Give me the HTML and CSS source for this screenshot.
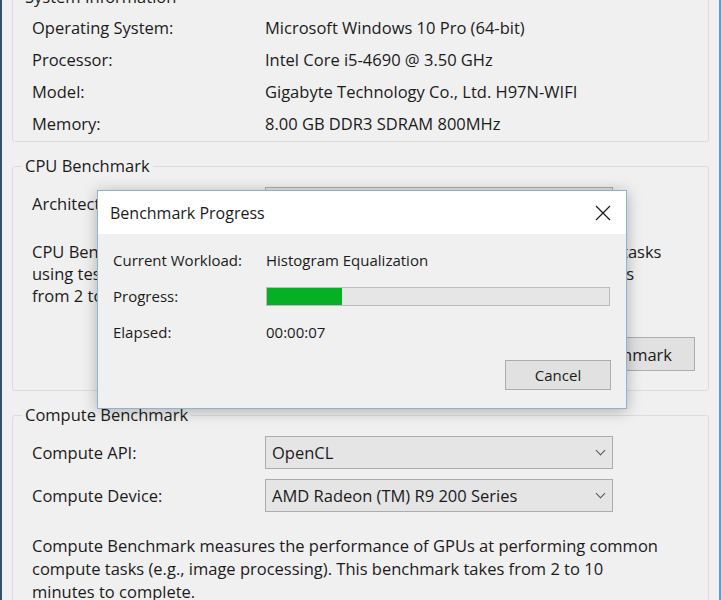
FILE: index.html
```html
<!DOCTYPE html>
<html lang="en">
<head>
    <meta charset="UTF-8">
    <meta name="viewport" content="width=device-width, initial-scale=1.0">
    <title>Geekbench</title>
    <link rel="stylesheet" href="styles.css">
</head>
<body>
    <div class="window">

        <fieldset class="group sysinfo">
            <legend>System Information</legend>
            <div class="group-body">
                <div class="info-row"><span class="label">Operating System:</span><span>Microsoft Windows 10 Pro (64-bit)</span></div>
                <div class="info-row"><span class="label">Processor:</span><span>Intel Core i5-4690 @ 3.50 GHz</span></div>
                <div class="info-row"><span class="label">Model:</span><span>Gigabyte Technology Co., Ltd. H97N-WIFI</span></div>
                <div class="info-row"><span class="label">Memory:</span><span>8.00 GB DDR3 SDRAM 800MHz</span></div>
            </div>
        </fieldset>

        <fieldset class="group">
            <legend>CPU Benchmark</legend>
            <div class="group-body">
                <div class="field">
                    <span class="label">Architecture:</span>
                    <div class="select">64-bit (x86_64)<span class="chevron"></span></div>
                </div>
                <p class="desc">CPU Benchmark measures the performance of CPUs at performing common tasks<br>
                    using tests that simulate real-world applications. This benchmark usually takes<br>
                    from 2 to 20 minutes to complete.</p>
                <div class="actions"><button class="btn">Run CPU Benchmark</button></div>
            </div>
        </fieldset>

        <fieldset class="group">
            <legend>Compute Benchmark</legend>
            <div class="group-body">
                <div class="field">
                    <span class="label">Compute API:</span>
                    <div class="select">OpenCL<span class="chevron"></span></div>
                </div>
                <div class="field">
                    <span class="label">Compute Device:</span>
                    <div class="select">AMD Radeon (TM) R9 200 Series<span class="chevron"></span></div>
                </div>
                <p class="desc compute-desc">Compute Benchmark measures the performance of GPUs at performing common<br>
                    compute tasks (e.g., image processing). This benchmark takes from 2 to 10<br>
                    minutes to complete.</p>
            </div>
        </fieldset>

        <!-- modal progress dialog -->
        <div class="dialog">
            <div class="dialog-title">
                <span>Benchmark Progress</span>
                <span class="close">
                    <svg width="16" height="16" viewBox="0 0 16 16">
                        <path d="M1 1 L15 15 M15 1 L1 15" stroke="#1a1a1a" stroke-width="1.2" fill="none"/>
                    </svg>
                </span>
            </div>
            <div class="dialog-body">
                <div class="dialog-row"><span class="dlabel">Current Workload:</span><span>Histogram Equalization</span></div>
                <div class="dialog-row">
                    <span class="dlabel">Progress:</span>
                    <div class="progress"><div class="progress-fill" style="width: 22%;"></div></div>
                </div>
                <div class="dialog-row"><span class="dlabel">Elapsed:</span><span>00:00:07</span></div>
                <div class="dialog-actions"><button class="btn cancel">Cancel</button></div>
            </div>
        </div>

    </div>
</body>
</html>
```

FILE: styles.css
```css
html, body {
    margin: 0;
    height: 100%;
    overflow: hidden;
}

body {
    background: #f0f0f0;
    font-family: "Open Sans", "Noto Sans", sans-serif;
    font-size: 16.5px;
    color: #1b1b1b;
}

.window {
    position: relative;
    display: flow-root;
    height: 600px;
    box-sizing: border-box;
    padding: 0 10px;
    border-left: 2px solid #34516e;
    border-right: 2px solid #5f9ccb;
}

.group {
    margin: 14px 0 0;
    padding: 0;
    min-width: 0;
    border: 1px solid #dcdcdc;
    border-radius: 3px;
}

.group legend {
    margin-left: 9px;
    padding: 0 3px;
    line-height: 20px;
}

.sysinfo {
    margin-top: -13px;
}

.group-body {
    padding: 11px 13px 19px 19px;
}

.sysinfo .group-body {
    padding-top: 4px;
    padding-bottom: 2px;
}

.info-row {
    display: flex;
    align-items: center;
    height: 32px;
}

.label {
    width: 233px;
    flex-shrink: 0;
}

.field {
    display: flex;
    align-items: center;
    margin-bottom: 10px;
}

.select {
    position: relative;
    width: 348px;
    height: 33px;
    box-sizing: border-box;
    display: flex;
    align-items: center;
    padding-left: 6px;
    background: #e5e5e5;
    border: 1px solid #acacac;
}

.chevron {
    position: absolute;
    right: 8px;
    top: 10px;
    width: 6px;
    height: 6px;
    border-right: 1.5px solid #555;
    border-bottom: 1.5px solid #555;
    transform: rotate(45deg);
}

.desc {
    margin: 21px 0 0;
    line-height: 22px;
    white-space: nowrap;
}

.compute-desc {
    margin-top: 22px;
    line-height: 23px;
}

.actions {
    display: flex;
    justify-content: flex-end;
    margin-top: 30px;
}

.btn {
    font-family: inherit;
    font-size: inherit;
    color: #1b1b1b;
    background: #e1e1e1;
    border: 1px solid #adadad;
    height: 34px;
    padding: 0 22px;
}

/* dialog */

.dialog {
    position: absolute;
    left: 95px;
    top: 190px;
    width: 530px;
    height: 219px;
    box-sizing: border-box;
    background: #f0f0f0;
    border: 1px solid #8bb3d8;
    box-shadow: 0 2px 14px rgba(0, 0, 0, 0.28);
    font-size: 15px;
}

.dialog-title {
    display: flex;
    align-items: center;
    justify-content: space-between;
    height: 43px;
    padding-left: 12px;
    background: #fff;
    font-size: 16px;
}

.close {
    width: 46px;
    height: 43px;
    display: flex;
    align-items: center;
    justify-content: center;
}

.dialog-body {
    padding: 8px 15px 0 15px;
}

.dialog-row {
    display: flex;
    align-items: center;
    height: 36px;
}

.dlabel {
    width: 153px;
    flex-shrink: 0;
}

.progress {
    width: 344px;
    height: 19px;
    box-sizing: border-box;
    background: #e6e6e6;
    border: 1px solid #bcbcbc;
}

.progress-fill {
    height: 100%;
    background: #06b025;
}

.dialog-actions {
    display: flex;
    justify-content: flex-end;
    margin-top: 10px;
}

.cancel {
    width: 106px;
    height: 30px;
    padding: 0;
}
```
